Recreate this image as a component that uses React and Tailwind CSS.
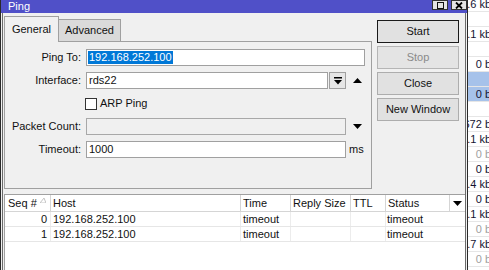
import React from "react";

const DownBar = () => (
  <svg width="8" height="8" viewBox="0 0 8 8">
    <rect x="0" y="0" width="8" height="1.5" fill="#000" />
    <polygon points="0,3 8,3 4,7.5" fill="#000" />
  </svg>
);

const TriDown = () => (
  <svg width="9" height="5" viewBox="0 0 9 5">
    <polygon points="0,0 9,0 4.5,5" fill="#000" />
  </svg>
);

const TriUp = () => (
  <svg width="9" height="5" viewBox="0 0 9 5">
    <polygon points="0,5 9,5 4.5,0" fill="#000" />
  </svg>
);

const bgRows = [
  { t: "1.6 kb" },
  { t: "" },
  { t: "1.1 kb" },
  { t: "" },
  { t: "0 b" },
  { t: "", sel: true },
  { t: "0 b", sel: true },
  { t: "" },
  { t: "672 b" },
  { t: "1.1 kb" },
  { t: "0 b", gray: true },
  { t: "0 b" },
  { t: "1.4 kb" },
  { t: "0 b" },
  { t: "1.1 kb" },
  { t: "0 b", gray: true },
  { t: "1.7 kb" },
  { t: "0 b", gray: true },
  { t: "0 b", gray: true },
];

const results = [
  { seq: "0", host: "192.168.252.100", time: "timeout", status: "timeout" },
  { seq: "1", host: "192.168.252.100", time: "timeout", status: "timeout" },
];

export default function App() {
  return (
    <div className="w-[489px] h-[270px] overflow-hidden flex bg-white text-[11px] leading-none text-[#111] font-['Liberation_Sans',Arial,sans-serif]">
      {/* Window */}
      <div className="w-[468px] h-full shrink-0 flex flex-col bg-[#f0f0f0] border-x border-[#2a2a2a]">
        {/* Title bar */}
        <div className="h-[13px] shrink-0 bg-[#5050c8] flex items-start justify-between">
          <span className="text-white pl-[7px] pt-[1px] text-[11px] leading-[11px]">Ping</span>
          <div className="flex gap-[3px]">
            <div className="w-[16px] h-[10px] bg-[#e4e4e4] border border-[#333] flex items-center justify-center">
              <div className="w-[7px] h-[7px] border border-[#111]"></div>
            </div>
            <div className="w-[16px] h-[10px] bg-[#e4e4e4] border border-[#333] flex items-center justify-center">
              <svg width="8" height="7" viewBox="0 0 8 7">
                <path d="M1 0.5 L7 6.5 M7 0.5 L1 6.5" stroke="#000" strokeWidth="1.8" />
              </svg>
            </div>
          </div>
        </div>

        {/* Body */}
        <div className="flex-1 flex flex-col mx-[1px] border-x border-[#6a6a6a] min-h-0">
          {/* Top section */}
          <div className="flex pl-[1px] pt-[3px]">
            {/* Tabs + panel */}
            <div className="w-[368px] flex flex-col">
              <div className="h-[25px] flex items-end relative z-10">
                <div className="w-[55px] h-[26px] mb-[-1px] border border-b-0 border-[#a0a0a0] bg-[#f0f0f0] flex items-center justify-center pb-[1px]">
                  General
                </div>
                <div className="w-[62px] h-[22px] border border-l-0 border-b-0 border-[#a0a0a0] bg-[#dadada] flex items-center justify-center">
                  Advanced
                </div>
              </div>
              <div className="h-[148px] border border-[#a0a0a0] bg-[#f0f0f0] pt-[7px] pr-[6px] flex flex-col gap-[6px]">
                {/* Ping To */}
                <div className="flex h-[17px] items-center">
                  <div className="w-[76px] text-right">Ping To:</div>
                  <div className="ml-[5px] flex-1 h-[17px] border border-[#a0a0a0] bg-white flex items-center pl-[1px]">
                    <span className="bg-[#0078d7] text-white px-[1px] h-[13px] flex items-center">192.168.252.100</span>
                  </div>
                </div>
                {/* Interface */}
                <div className="flex h-[17px] items-center">
                  <div className="w-[76px] text-right">Interface:</div>
                  <div className="ml-[5px] flex-1 h-[17px] border border-[#a0a0a0] bg-white flex items-center pl-[2px]">
                    rds22
                  </div>
                  <div className="ml-[1px] w-[17px] h-[17px] border border-[#a0a0a0] bg-[#e6e6e6] flex items-center justify-center">
                    <DownBar />
                  </div>
                  <div className="w-[19px] flex justify-end pr-[3px]">
                    <TriUp />
                  </div>
                </div>
                {/* ARP Ping */}
                <div className="flex h-[17px] items-center">
                  <div className="w-[76px]"></div>
                  <div className="ml-[4px] w-[12px] h-[12px] border border-[#333] bg-white"></div>
                  <span className="ml-[3px]">ARP Ping</span>
                </div>
                {/* Packet Count */}
                <div className="flex h-[17px] items-center">
                  <div className="w-[76px] text-right">Packet Count:</div>
                  <div className="ml-[5px] flex-1 h-[17px] border border-[#a8a8a8] bg-[#f0f0f0]"></div>
                  <div className="w-[19px] flex justify-end pr-[3px]">
                    <TriDown />
                  </div>
                </div>
                {/* Timeout */}
                <div className="flex h-[17px] items-center">
                  <div className="w-[76px] text-right">Timeout:</div>
                  <div className="ml-[5px] flex-1 h-[17px] border border-[#a0a0a0] bg-white flex items-center pl-[2px]">
                    1000
                  </div>
                  <div className="w-[19px] pl-[3px]">ms</div>
                </div>
              </div>
            </div>

            {/* Buttons */}
            <div className="ml-[5px] pt-[4px] w-[82px] flex flex-col gap-[3px]">
              <div className="h-[23px] border border-[#1a1a1a] bg-[#e1e1e1] flex items-center justify-center">Start</div>
              <div className="h-[23px] border border-[#b5b5b5] bg-[#e4e4e4] text-[#8a8a8a] flex items-center justify-center">Stop</div>
              <div className="h-[23px] border border-[#adadad] bg-[#e1e1e1] flex items-center justify-center">Close</div>
              <div className="h-[23px] border border-[#adadad] bg-[#e1e1e1] flex items-center justify-center">New Window</div>
            </div>
          </div>

          {/* Table */}
          <div className="mt-[5px] ml-[1px] flex-1 bg-white border-t border-l border-[#a0a0a0] flex flex-col">
            <div className="h-[17px] flex border-b border-[#d5d5d5]">
              <div className="w-[46px] border-r border-[#d5d5d5] flex items-center pl-[3px] relative">
                Seq #
                <svg className="absolute left-[35px] top-[3px]" width="6" height="5" viewBox="0 0 6 5">
                  <polygon points="0,5 6,5 4,0" fill="none" stroke="#c4c4c4" strokeWidth="1" />
                </svg>
              </div>
              <div className="w-[190px] border-r border-[#d5d5d5] flex items-center pl-[2px]">Host</div>
              <div className="w-[50px] border-r border-[#d5d5d5] flex items-center pl-[2px]">Time</div>
              <div className="w-[60px] border-r border-[#d5d5d5] flex items-center pl-[2px]">Reply Size</div>
              <div className="w-[35px] border-r border-[#d5d5d5] flex items-center pl-[2px]">TTL</div>
              <div className="w-[64px] border-r border-[#d5d5d5] flex items-center pl-[2px]">Status</div>
              <div className="flex-1 flex items-center justify-center">
                <TriDown />
              </div>
            </div>
            {results.map((r) => (
              <div key={r.seq} className="h-[15px] flex border-b border-[#e6e6e6]">
                <div className="w-[46px] border-r border-[#ececec] flex items-center justify-end pr-[3px]">{r.seq}</div>
                <div className="w-[190px] border-r border-[#ececec] flex items-center pl-[2px]">{r.host}</div>
                <div className="w-[50px] border-r border-[#ececec] flex items-center pl-[2px]">{r.time}</div>
                <div className="w-[60px] border-r border-[#ececec]"></div>
                <div className="w-[35px] border-r border-[#ececec]"></div>
                <div className="w-[64px] flex items-center pl-[1px]">{r.status}</div>
                <div className="flex-1"></div>
              </div>
            ))}
          </div>
        </div>
      </div>

      {/* Background list column */}
      <div className="flex-1 overflow-hidden bg-white">
        <div className="w-[23px] mt-[-3px] flex flex-col">
          {bgRows.map((r, i) => (
            <div
              key={i}
              className={
                "h-[15px] shrink-0 flex items-center justify-end whitespace-nowrap border-b border-[#e6e6e6] " +
                (r.sel ? "bg-[#a6c2ea] " : "") +
                (r.gray ? "text-[#a0a0a0]" : "text-[#141432]")
              }
            >
              {r.t}
            </div>
          ))}
        </div>
      </div>
    </div>
  );
}
